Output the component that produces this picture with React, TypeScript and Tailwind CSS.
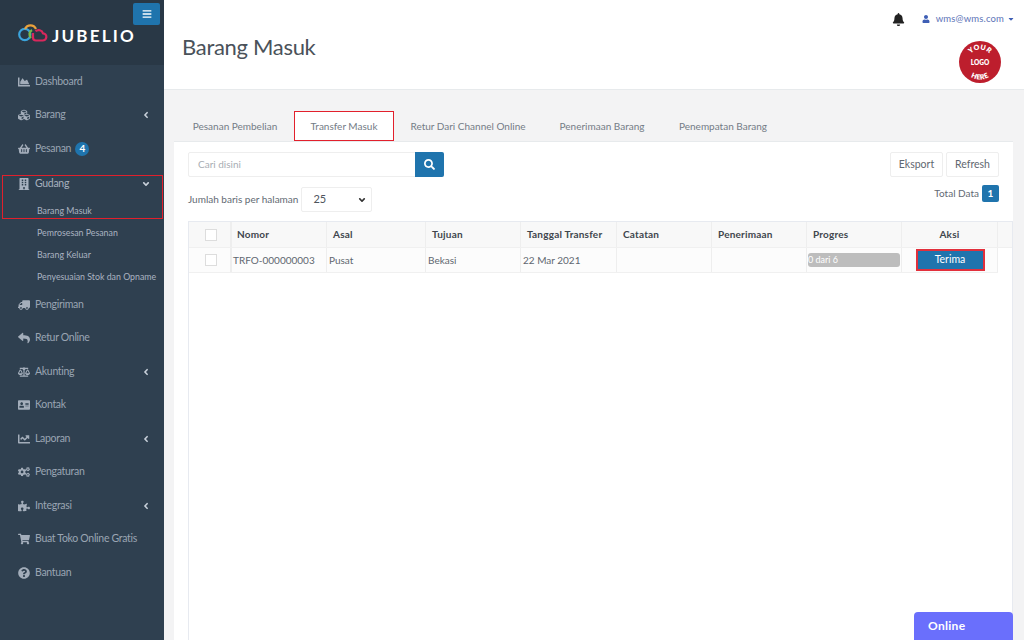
import React from "react";
import {
  FaChartArea, FaCubes, FaShoppingBasket, FaBuilding, FaTruck, FaReply, FaBalanceScale,
  FaAddressCard, FaChartLine, FaCogs, FaPuzzlePiece, FaShoppingCart, FaQuestionCircle,
  FaBell, FaUser, FaBars, FaSearch, FaAngleLeft, FaAngleDown, FaCaretDown,
} from "react-icons/fa";

const font = { fontFamily: "Lato, 'Noto Sans', sans-serif" };

const MenuRow = ({ icon, label, arrow, badge }: { icon: React.ReactNode; label: string; arrow?: boolean; badge?: string }) => (
  <div className="flex h-[33.5px] items-center whitespace-nowrap pl-[18px] pr-[13px] text-[10.5px] tracking-[-0.3px] text-[#9aa5b3]">
    <span className="flex w-[17px] justify-start text-[12px] text-[#a3adba]">{icon}</span>
    <span>{label}</span>
    {badge && (
      <span className="ml-[4px] flex h-[14px] w-[14px] items-center justify-center rounded-full bg-[#1f74ad] text-[10px] font-bold text-white">
        {badge}
      </span>
    )}
    {arrow && <FaAngleLeft className="ml-auto text-[10px] text-[#c8d0da]" />}
  </div>
);

const SubRow = ({ label }: { label: string }) => (
  <div className="flex h-[22px] items-center whitespace-nowrap pl-[37px] text-[8.8px] text-[#aab3c0]">{label}</div>
);

const Logo = () => (
  <svg width="30" height="18" viewBox="0 0 30 18" fill="none" strokeWidth="2.2">
    <circle cx="6.8" cy="10.5" r="5.6" stroke="#3ba4dc" />
    <path d="M7 5 a6 6 0 0 1 11 0" stroke="#e9a13b" />
    <path d="M13 14 a5 5 0 0 1 1 -8" stroke="#79b94a" />
    <path d="M15 9 v4.5 a3 3 0 0 0 3 3 h6.5 a3.6 3.6 0 0 0 0.5 -7.2 a4.6 4.6 0 0 0 -7.5 -2" stroke="#d9285c" />
  </svg>
);

const BrandBadge = () => (
  <svg width="42" height="42" viewBox="0 0 42 42" className="mr-[14px] mt-[15px]">
    <circle cx="21" cy="21" r="21" fill="#bd1e2d" />
    <defs>
      <path id="topArc" d="M8.5 21 A12.5 12.5 0 0 1 33.5 21" />
      <path id="bottomArc" d="M3.5 21 A17.5 17.5 0 0 0 38.5 21" />
    </defs>
    <text fontSize="7" fontWeight="800" fill="#fff" textAnchor="middle" letterSpacing="0.3">
      <textPath href="#topArc" startOffset="50%">YOUR</textPath>
    </text>
    <text x="21" y="23.5" fontSize="6.5" fontWeight="800" fill="#fff" textAnchor="middle">LOGO</text>
    <text fontSize="7" fontWeight="800" fill="#fff" textAnchor="middle" letterSpacing="0.3">
      <textPath href="#bottomArc" startOffset="50%">HERE</textPath>
    </text>
  </svg>
);

const tabs = ["Pesanan Pembelian", "Transfer Masuk", "Retur Dari Channel Online", "Penerimaan Barang", "Penempatan Barang"];
const tabWidths = ["w-[110px]", "w-[100px]", "w-[148px]", "w-[120px]", "w-[122px]"];

const columns = [
  { label: "Nomor", w: "w-[95px]", cls: "pl-[5px]" },
  { label: "Asal", w: "w-[99px]", cls: "pl-[6px]" },
  { label: "Tujuan", w: "w-[95px]", cls: "pl-[6px]" },
  { label: "Tanggal Transfer", w: "w-[96px]", cls: "pl-[6px]" },
  { label: "Catatan", w: "w-[95px]", cls: "pl-[6px]" },
  { label: "Penerimaan", w: "w-[95px]", cls: "pl-[6px]" },
  { label: "Progres", w: "w-[95px]", cls: "pl-[6px]" },
  { label: "Aksi", w: "w-[96px]", cls: "justify-center" },
];

export default function App() {
  return (
    <div className="flex h-[640px] w-[1024px] overflow-hidden bg-[#f3f3f4]" style={font}>
      {/* Sidebar */}
      <aside className="flex h-full w-[164px] shrink-0 flex-col bg-[#2f4050]">
        <div className="relative flex h-[65px] items-center bg-[#293846] pl-[18px]">
          <Logo />
          <span className="ml-[4px] mt-[6px] text-[17px] font-bold tracking-[2.2px] text-white">JUBELIO</span>
          <button className="absolute right-[4px] top-[3px] flex h-[22px] w-[27px] items-center justify-center rounded-[2px] bg-[#1f74ad] text-[10px] text-white">
            <FaBars />
          </button>
        </div>
        <MenuRow icon={<FaChartArea />} label="Dashboard" />
        <MenuRow icon={<FaCubes />} label="Barang" arrow />
        <MenuRow icon={<FaShoppingBasket />} label="Pesanan" badge="4" />
        <div className="relative mt-[1px]">
          <div className="flex h-[33.5px] items-center whitespace-nowrap pl-[18px] pr-[13px] pt-[2px] text-[10.5px] tracking-[-0.3px] text-[#a7b1bf]">
            <span className="flex w-[17px] text-[12px]"><FaBuilding /></span>
            Gudang
            <FaAngleDown className="ml-auto text-[10px] text-[#c8d0da]" />
          </div>
          <SubRow label="Barang Masuk" />
          <div className="absolute left-[2px] right-[1px] top-[8.5px] h-[44px] border border-[#e2202c]" />
        </div>
        <SubRow label="Pemrosesan Pesanan" />
        <SubRow label="Barang Keluar" />
        <SubRow label="Penyesuaian Stok dan Opname" />
        <MenuRow icon={<FaTruck className="-scale-x-100" />} label="Pengiriman" />
        <MenuRow icon={<FaReply />} label="Retur Online" />
        <MenuRow icon={<FaBalanceScale />} label="Akunting" arrow />
        <MenuRow icon={<FaAddressCard />} label="Kontak" />
        <MenuRow icon={<FaChartLine />} label="Laporan" arrow />
        <MenuRow icon={<FaCogs />} label="Pengaturan" />
        <MenuRow icon={<FaPuzzlePiece />} label="Integrasi" arrow />
        <MenuRow icon={<FaShoppingCart />} label="Buat Toko Online Gratis" />
        <MenuRow icon={<FaQuestionCircle />} label="Bantuan" />
      </aside>

      {/* Main */}
      <main className="relative flex min-w-0 flex-1 flex-col">
        <header className="flex h-[90px] shrink-0 justify-between border-b border-[#e7eaec] bg-white pl-[18px] pr-[9px]">
          <h1 className="mt-[33px] text-[22px] leading-[28px] tracking-[-0.3px] text-[#4a525a]">Barang Masuk</h1>
          <div className="flex flex-col items-end pt-[12px]">
            <div className="flex h-[14px] items-center text-[#5d74b8]">
              <FaBell className="mr-[17px] text-[13px] text-[#222]" />
              <FaUser className="mr-[6px] text-[8px] text-[#3f5fb5]" />
              <span className="text-[9.5px] tracking-[0.15px]">wms@wms.com</span>
              <FaCaretDown className="ml-[3px] text-[8px] text-[#3f5fb5]" />
            </div>
            <BrandBadge />
          </div>
        </header>

        <section className="flex min-h-0 flex-1 flex-col pl-[10px] pr-[11px] pt-[21px]">
          {/* Tabs */}
          <div className="flex h-[30px] shrink-0 items-stretch pl-[6px] text-[10px] text-[#737c86]">
            {tabs.map((t, i) => (
              <div
                key={t}
                className={`flex ${tabWidths[i]} items-center justify-center whitespace-nowrap ${i === 1 ? "border border-[#e2202c] bg-white" : ""} ${i === 0 ? "mr-[4px]" : ""}`}
              >
                {t}
              </div>
            ))}
          </div>

          {/* Panel */}
          <div className="flex min-h-0 flex-1 flex-col border-t border-[#e7eaec] bg-white px-[14px] pt-[10px]">
            <div className="flex justify-between">
              <div className="flex h-[25px] w-[256px] rounded-[2px] border border-[#eeeeee]">
                <span className="flex flex-1 items-center pl-[9px] text-[10px] text-[#a8adb3]">Cari disini</span>
                <button className="-my-px -mr-px flex w-[29px] items-center justify-center rounded-r-[2px] bg-[#1f74ad] text-[11px] text-white">
                  <FaSearch />
                </button>
              </div>
              <div className="flex h-[25px] gap-[3px] text-[10.5px] text-[#5f6770]">
                <div className="flex w-[53px] items-center justify-center rounded-[2px] border border-[#eeeeee]">Eksport</div>
                <div className="flex w-[53px] items-center justify-center rounded-[2px] border border-[#eeeeee]">Refresh</div>
              </div>
            </div>

            <div className="mt-[10px] flex h-[25px] items-start justify-between">
              <div className="flex items-center text-[10px] text-[#626a73]">
                <span>Jumlah baris per halaman</span>
                <div className="ml-[3px] flex h-[25px] w-[71px] items-center justify-between rounded-[2px] border border-[#eeeeee] pl-[11px] pr-[4px] text-[11px] text-[#4d545c]">
                  25
                  <FaAngleDown className="text-[10px] text-[#333]" />
                </div>
              </div>
              <div className="-mt-[2px] flex items-center text-[10px] text-[#626a73]">
                Total Data
                <span className="ml-[3px] flex h-[17px] w-[17px] items-center justify-center rounded-[2px] bg-[#1f74ad] text-[10px] font-bold text-white">1</span>
              </div>
            </div>

            {/* Table */}
            <div className="-mr-[14px] mt-[9px] flex min-h-0 flex-1 flex-col border-l border-r border-t border-[#e7eaf0] text-[10px]">
              <div className="flex h-[26px] shrink-0 border-b border-[#f0f0f0] bg-[#f8f8f8] font-bold tracking-[0.2px] text-[#3f464d]">
                <div className="flex w-[43px] items-center border-r-2 border-[#eeeeee] pl-[16px]">
                  <span className="h-[12px] w-[12px] border border-[#dddddd] bg-white" />
                </div>
                {columns.map((c) => (
                  <div key={c.label} className={`flex ${c.w} items-center border-r border-[#eeeeee] ${c.cls}`}>
                    {c.label}
                  </div>
                ))}
              </div>
              <div className="flex h-[25px] w-[809px] shrink-0 border-b border-[#f0f0f0] bg-[#fcfcfc] text-[#5f6770]">
                <div className="flex w-[43px] items-center border-r-2 border-[#eeeeee] pl-[16px]">
                  <span className="h-[12px] w-[12px] border border-[#dddddd] bg-white" />
                </div>
                <div className="flex w-[95px] items-center border-r border-[#eeeeee] pl-[1px]">TRFO-000000003</div>
                <div className="flex w-[99px] items-center border-r border-[#eeeeee] pl-[2px]">Pusat</div>
                <div className="flex w-[95px] items-center border-r border-[#eeeeee] pl-[2px]">Bekasi</div>
                <div className="flex w-[96px] items-center border-r border-[#eeeeee] pl-[2px]">22 Mar 2021</div>
                <div className="w-[95px] border-r border-[#eeeeee]" />
                <div className="w-[95px] border-r border-[#eeeeee]" />
                <div className="flex w-[95px] items-center border-r border-[#eeeeee] px-[1px]">
                  <div className="flex h-[14px] w-full items-center rounded-[3px] bg-[#bdbdbd] text-[9px] text-white">0 dari 6</div>
                </div>
                <div className="flex w-[96px] items-center justify-center border-r border-[#eeeeee] pl-[1px]">
                  <div className="flex h-[22px] w-[69px] items-center justify-center border-2 border-[#e2303c] bg-[#1f74ad] text-[10.5px] text-white">Terima</div>
                </div>
              </div>
            </div>
          </div>
        </section>

        <div className="absolute bottom-0 right-[11px] flex h-[28px] w-[99px] items-center rounded-t-[4px] bg-[#6a6ffc] pl-[14px] text-[12px] font-bold tracking-[0.3px] text-white">
          Online
        </div>
      </main>
    </div>
  );
}
